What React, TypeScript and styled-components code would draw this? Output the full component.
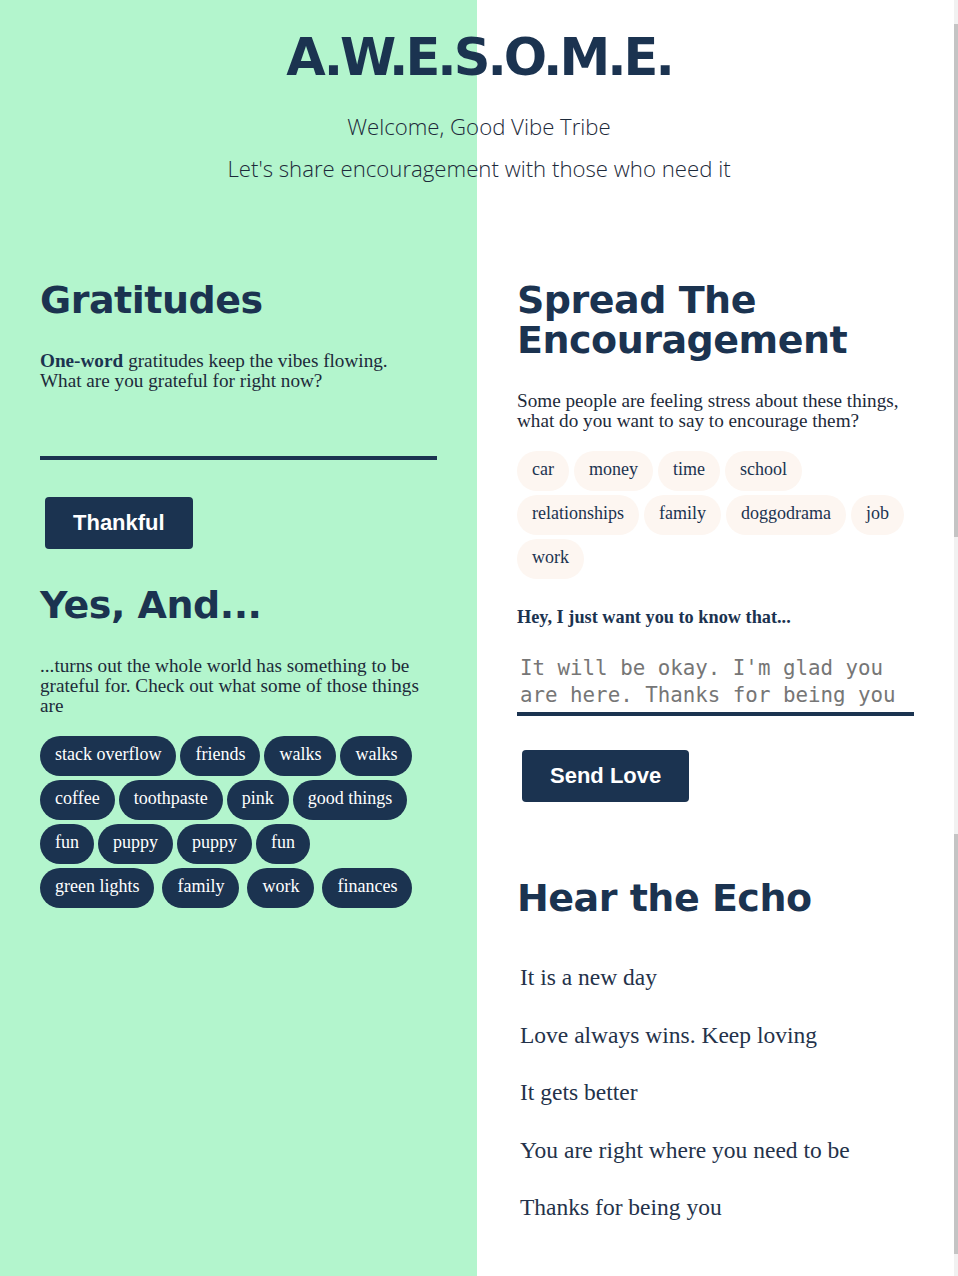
import React from 'react';
import styled, { createGlobalStyle } from 'styled-components';

const navy = '#1b3350';
const mint = '#b3f5cd';

const GlobalStyle = createGlobalStyle`
  body {
    margin: 0;
    background: #fff;
  }
  * {
    box-sizing: border-box;
  }
`;

const Page = styled.div`
  min-height: 1276px;
  background: linear-gradient(90deg, ${mint} 0, ${mint} 477px, #fff 477px);
  color: ${navy};
  font-family: 'Liberation Serif', serif;
  position: relative;
`;

const Header = styled.header`
  text-align: center;
  padding-top: 25px;
`;

const Title = styled.h1`
  margin: 0;
  font-family: 'DejaVu Sans', sans-serif;
  font-weight: 700;
  font-size: 51px;
  line-height: 66px;
  letter-spacing: -3px;
`;

const Tagline = styled.p<{ $top?: number }>`
  margin: ${({ $top }) => $top ?? 0}px 0 0;
  font-family: 'Open Sans', sans-serif;
  font-weight: 300;
  font-size: 22.2px;
  line-height: 42px;
  color: #1d2a3a;
`;

const Columns = styled.main`
  display: grid;
  grid-template-columns: 477px 1fr;
  padding-top: 90px;
`;

const Column = styled.section`
  padding: 0 40px;
`;

const Heading = styled.h2<{ $top?: number }>`
  margin: ${({ $top }) => $top ?? 0}px 0 0;
  font-family: 'DejaVu Sans', sans-serif;
  font-weight: 700;
  font-size: 38px;
  line-height: 40px;
  letter-spacing: -0.5px;
`;

const Text = styled.p`
  margin: 31px 0 0;
  font-size: 19.2px;
  line-height: 20px;
  color: #1d2a3a;
  max-width: 390px;
`;

const Strong = styled.b`
  display: inline-block;
  margin-right: 5px;
  color: ${navy};
`;

const LineInput = styled.input`
  display: block;
  margin-top: 17px;
  width: 397px;
  height: 52px;
  border: none;
  border-bottom: 4px solid ${navy};
  background: transparent;
  outline: none;
  font-family: 'DejaVu Sans Mono', monospace;
  font-size: 20px;
  color: ${navy};
`;

const Button = styled.button<{ $top: number }>`
  display: block;
  margin: ${({ $top }) => $top}px 0 0 5px;
  height: 52px;
  padding: 0 28px;
  border: none;
  border-radius: 4px;
  background: ${navy};
  color: #fff;
  font-family: 'Liberation Sans', Arial, sans-serif;
  font-weight: 700;
  font-size: 22px;
  cursor: pointer;
`;

const ChipList = styled.div<{ $top: number }>`
  display: flex;
  flex-wrap: wrap;
  margin-top: ${({ $top }) => $top}px;
  max-width: 420px;
`;

const Chip = styled.span<{ $dark?: boolean; $space?: number }>`
  display: inline-flex;
  align-items: center;
  height: 40px;
  padding: 0 15px 4px;
  margin: 0 ${({ $space }) => $space ?? 4}px 4px 0;
  border-radius: 20px;
  background: ${({ $dark }) => ($dark ? navy : '#fdf6f1')};
  color: ${({ $dark }) => ($dark ? '#fff' : navy)};
  font-size: 18px;
  white-space: nowrap;
`;

const RowBreak = styled.span`
  flex-basis: 100%;
  height: 0;
`;

const Label = styled.label`
  display: block;
  margin-top: 24px;
  font-size: 18.3px;
  font-weight: 700;
  line-height: 20px;
`;

const TextArea = styled.textarea`
  display: block;
  margin-top: 24px;
  width: 397px;
  height: 65px;
  padding: 4px 3px 0;
  border: none;
  border-bottom: 4px solid ${navy};
  background: transparent;
  outline: none;
  resize: none;
  overflow: hidden;
  font-family: 'DejaVu Sans Mono', monospace;
  font-size: 20.8px;
  line-height: 27px;
  color: ${navy};
  &::placeholder {
    color: #767676;
  }
`;

const EchoList = styled.ul`
  list-style: none;
  margin: 31px 0 0;
  padding: 0 0 0 3px;
`;

const Echo = styled.li`
  font-size: 23.5px;
  line-height: 57.5px;
  color: #24324a;
`;

const Scrollbar = styled.div`
  position: absolute;
  top: 0;
  right: 0;
  bottom: 0;
  width: 4px;
  background: #f1f1f1;
  display: flex;
  flex-direction: column;
  padding: 24px 0 22px;
  justify-content: space-between;
`;

const Thumb = styled.div<{ $h: number }>`
  height: ${({ $h }) => $h}px;
  background: #c4c4c4;
`;

const gratitudes: { word: string; space?: number; breakAfter?: boolean }[] = [
  { word: 'stack overflow' },
  { word: 'friends' },
  { word: 'walks' },
  { word: 'walks', breakAfter: true },
  { word: 'coffee' },
  { word: 'toothpaste' },
  { word: 'pink' },
  { word: 'good things', breakAfter: true },
  { word: 'fun' },
  { word: 'puppy' },
  { word: 'puppy' },
  { word: 'fun', breakAfter: true },
  { word: 'green lights', space: 8 },
  { word: 'family', space: 8 },
  { word: 'work', space: 8 },
  { word: 'finances', space: 8 },
];

const stressors = ['car', 'money', 'time', 'school', 'relationships', 'family', 'doggodrama', 'job', 'work'];

const echoes = [
  'It is a new day',
  'Love always wins. Keep loving',
  'It gets better',
  'You are right where you need to be',
  'Thanks for being you',
];

export default function App() {
  return (
    <Page>
      <GlobalStyle />
      <Header>
        <Title>A.W.E.S.O.M.E.</Title>
        <Tagline $top={15}>Welcome, Good Vibe Tribe</Tagline>
        <Tagline>Let's share encouragement with those who need it</Tagline>
      </Header>
      <Columns>
        <Column>
          <Heading>Gratitudes</Heading>
          <Text>
            <Strong>One-word</Strong>gratitudes keep the vibes flowing. What are you grateful for right now?
          </Text>
          <LineInput aria-label="gratitude" />
          <Button $top={37}>Thankful</Button>
          <Heading $top={36}>Yes, And...</Heading>
          <Text>
            ...turns out the whole world has something to be grateful for. Check out what some of those things are
          </Text>
          <ChipList $top={20}>
            {gratitudes.map((g, i) => (
              <React.Fragment key={i}>
                <Chip $dark $space={g.space}>{g.word}</Chip>
                {g.breakAfter && <RowBreak />}
              </React.Fragment>
            ))}
          </ChipList>
        </Column>
        <Column>
          <Heading>
            Spread The
            <br />
            Encouragement
          </Heading>
          <Text>
            Some people are feeling stress about these things, what do you want to say to encourage them?
          </Text>
          <ChipList $top={20}>
            {stressors.map((s) => (
              <Chip key={s} $space={5}>{s}</Chip>
            ))}
          </ChipList>
          <Label htmlFor="love">Hey, I just want you to know that...</Label>
          <TextArea id="love" placeholder="It will be okay. I'm glad you are here. Thanks for being you" />
          <Button $top={34}>Send Love</Button>
          <Heading $top={76}>Hear the Echo</Heading>
          <EchoList>
            {echoes.map((e) => (
              <Echo key={e}>{e}</Echo>
            ))}
          </EchoList>
        </Column>
      </Columns>
      <Scrollbar>
        <Thumb $h={513} />
        <Thumb $h={420} />
      </Scrollbar>
    </Page>
  );
}
